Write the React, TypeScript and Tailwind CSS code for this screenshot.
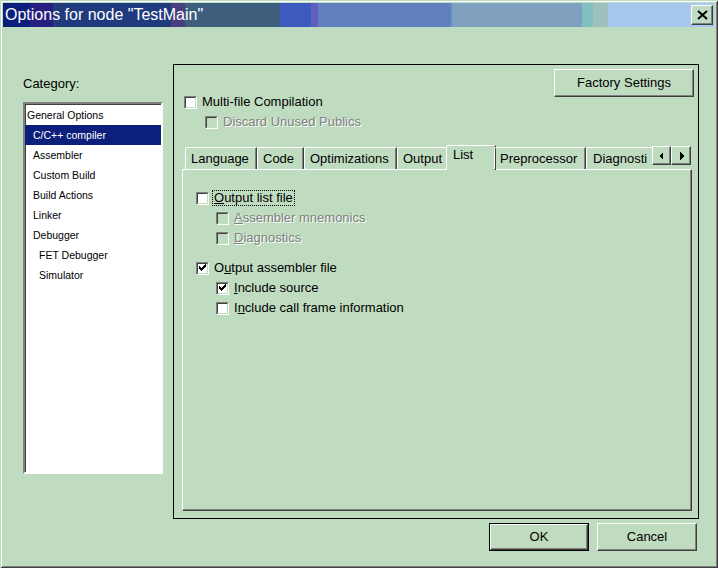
import React from "react";

const raised =
  "border border-t-white border-l-white border-r-[#404040] border-b-[#404040] shadow-[inset_-1px_-1px_0_#808080]";

const categories = [
  { label: "General Options", pad: "pl-[2px]" },
  { label: "C/C++ compiler", pad: "pl-[8px]", selected: true },
  { label: "Assembler", pad: "pl-[8px]" },
  { label: "Custom Build", pad: "pl-[8px]" },
  { label: "Build Actions", pad: "pl-[8px]" },
  { label: "Linker", pad: "pl-[8px]" },
  { label: "Debugger", pad: "pl-[8px]" },
  { label: "FET Debugger", pad: "pl-[14px]" },
  { label: "Simulator", pad: "pl-[14px]" },
];

const tabs = [
  { label: "Language", w: "w-[72px]" },
  { label: "Code", w: "w-[47px]" },
  { label: "Optimizations", w: "w-[93px]" },
  { label: "Output", w: "w-[51px]" },
  { label: "List", w: "w-[50px]", selected: true },
  { label: "Preprocessor", w: "w-[92px]" },
];

function CheckBox({ checked, disabled }: { checked?: boolean; disabled?: boolean }) {
  return (
    <span className="flex h-[13px] w-[13px] shrink-0 border border-t-[#808080] border-l-[#808080] border-r-white border-b-white">
      <span
        className={`relative flex h-full w-full border border-t-[#404040] border-l-[#404040] border-r-[#c0dcc0] border-b-[#c0dcc0] ${
          disabled ? "bg-[#c0dcc0]" : "bg-white"
        }`}
      >
        {checked && (
          <svg width="9" height="9" viewBox="0 0 9 9" shapeRendering="crispEdges">
            <rect x="1" y="2" width="1" height="3" fill="#000" />
            <rect x="2" y="3" width="1" height="3" fill="#000" />
            <rect x="3" y="4" width="1" height="3" fill="#000" />
            <rect x="4" y="3" width="1" height="3" fill="#000" />
            <rect x="5" y="2" width="1" height="3" fill="#000" />
            <rect x="6" y="1" width="1" height="3" fill="#000" />
            <rect x="7" y="0" width="1" height="3" fill="#000" />
          </svg>
        )}
      </span>
    </span>
  );
}

function Option({
  children,
  checked,
  disabled,
  focus,
  indent,
}: {
  children: React.ReactNode;
  checked?: boolean;
  disabled?: boolean;
  focus?: boolean;
  indent: string;
}) {
  return (
    <div className={`flex h-[20px] items-center ${indent}`}>
      <CheckBox checked={checked} disabled={disabled} />
      <span
        className={`ml-[3px] border px-px leading-[14px] ${
          focus ? "border-dotted border-black" : "border-transparent"
        } ${disabled ? "text-[#808080] [text-shadow:1px_1px_0_#ffffff]" : "text-black"}`}
      >
        {children}
      </span>
    </div>
  );
}

function ArrowButton({ dir }: { dir: "left" | "right" }) {
  return (
    <div className={`flex h-[19px] items-center justify-center bg-[#c0dcc0] ${raised} ${dir === "left" ? "w-[19px]" : "w-[20px]"}`}>
      <svg width="5" height="8" viewBox="0 0 5 8" shapeRendering="crispEdges">
        {dir === "left" ? <polygon points="4,0 4,8 0,4" fill="#000" /> : <polygon points="1,0 1,8 5,4" fill="#000" />}
      </svg>
    </div>
  );
}

export default function App() {
  return (
    <div className="h-[568px] w-[718px] overflow-hidden bg-[#c0dcc0] pl-[3px] pt-[3px] font-['Liberation_Sans',Arial,sans-serif] text-[13px] text-black shadow-[inset_1px_1px_0_#c0dcc0,inset_-1px_-1px_0_#404040,inset_2px_2px_0_#ffffff,inset_-2px_-2px_0_#808080]">
      {/* title bar */}
      <div className="flex h-[24px] w-[711px] items-center bg-[linear-gradient(to_right,#0c1f7c_0px,#0c1f7c_27px,#261e80_27px,#261e80_50px,#1f3b7e_50px,#1f3b7e_168px,#483e80_168px,#483e80_182px,#3e5e7e_182px,#3e5e7e_277px,#3d5bbe_277px,#3d5bbe_308px,#5f5fc0_308px,#5f5fc0_315px,#5f7fbf_315px,#5f7fbf_447px,#5f8fbf_447px,#5f8fbf_449px,#7fa0bf_449px,#7fa0bf_579px,#80c0c0_579px,#80c0c0_590px,#a0c0bd_590px,#a0c0bd_605px,#a6c8ee_605px,#a6c8ee_711px)] pl-[2px]">
        <span className="text-[16px] leading-[24px] text-white">Options for node "TestMain"</span>
        <div className={`ml-auto mr-[1px] flex h-[20px] w-[22px] items-center justify-center bg-[#c0dcc0] ${raised}`}>
          <svg width="11" height="10" viewBox="0 0 11 10">
            <path d="M1 1 L10 9 M10 1 L1 9" stroke="#000" strokeWidth="2" />
          </svg>
        </div>
      </div>

      {/* body */}
      <div className="mt-[37px] flex">
        <div className="ml-[20px] flex w-[140px] flex-col">
          <div className="mt-[12px] h-[16px] leading-[16px]">Category:</div>
          <div className="mt-[10px] h-[372px] border-2 border-t-[#808080] border-l-[#808080] border-r-white border-b-white bg-white shadow-[inset_1px_1px_0_#404040]">
            <div className="flex flex-col pt-px">
              {categories.map((c) => (
                <div
                  key={c.label}
                  className={`h-[20px] text-[10.5px] leading-[20px] ${c.pad} ${
                    c.selected ? "bg-[#0b1f7b] text-white" : "text-black"
                  }`}
                >
                  {c.label}
                </div>
              ))}
            </div>
          </div>
        </div>

        {/* right panel */}
        <div className="ml-[10px] flex h-[455px] w-[526px] flex-col border border-black">
          <div className="flex h-[80px] justify-between">
            <div className="flex flex-col pl-[10px] pt-[27px]">
              <Option indent="">Multi-file Compilation</Option>
              <Option indent="pl-[21px]" disabled>
                Discard Unused Publics
              </Option>
            </div>
            <div className={`mr-[4px] mt-[4px] flex h-[28px] w-[140px] items-center justify-center ${raised}`}>
              Factory Settings
            </div>
          </div>

          {/* tabs */}
          <div className="relative z-10 ml-[8px] flex h-[24px] w-[510px] pl-[3px]">
            <div className="-mb-[1px] flex h-[25px] w-[467px] items-start overflow-hidden">
              {tabs.map((t) =>
                t.selected ? (
                  <div
                    key={t.label}
                    className={`-mx-[2px] flex h-[25px] shrink-0 rounded-tl-[2px] border-l border-t border-r border-l-white border-t-white border-r-[#404040] bg-[#c0dcc0] pl-[6px] pt-[1px] shadow-[inset_-1px_0_0_#808080] ${t.w}`}
                  >
                    <span className="leading-[16px]">{t.label}</span>
                  </div>
                ) : (
                  <div
                    key={t.label}
                    className={`mt-[2px] flex h-[22px] shrink-0 items-center rounded-tl-[2px] border-l border-t border-r border-l-white border-t-white border-r-[#404040] pl-[5px] shadow-[inset_-1px_0_0_#808080] ${t.w}`}
                  >
                    <span className="leading-[16px]">{t.label}</span>
                  </div>
                )
              )}
              <div className="mt-[2px] flex h-[22px] w-[70px] shrink-0 items-center rounded-tl-[2px] border-l border-t border-l-white border-t-white pl-[6px]">
                <span className="leading-[16px]">Diagnosti</span>
              </div>
            </div>
            <div className="mt-[1px] flex">
              <ArrowButton dir="left" />
              <ArrowButton dir="right" />
            </div>
          </div>

          {/* tab page */}
          <div className="mb-[7px] ml-[8px] w-[510px] flex-1 border border-t-white border-l-white border-r-[#404040] border-b-[#404040] shadow-[inset_-1px_-1px_0_#808080]">
            <div className="flex flex-col pt-[18px]">
              <Option indent="pl-[13px]" focus>
                <u>O</u>utput list file
              </Option>
              <Option indent="pl-[33px]" disabled>
                <u>A</u>ssembler mnemonics
              </Option>
              <Option indent="pl-[33px]" disabled>
                <u>D</u>iagnostics
              </Option>
              <div className="h-[10px]" />
              <Option indent="pl-[13px]" checked>
                O<u>u</u>tput assembler file
              </Option>
              <Option indent="pl-[33px]" checked>
                <u>I</u>nclude source
              </Option>
              <Option indent="pl-[33px]">
                I<u>n</u>clude call frame information
              </Option>
            </div>
          </div>
        </div>
      </div>

      {/* dialog buttons */}
      <div className="mr-[21px] mt-[4px] flex justify-end gap-[8px]">
        <div className="h-[28px] w-[100px] border border-black">
          <div className={`flex h-full w-full items-center justify-center ${raised}`}>OK</div>
        </div>
        <div className={`flex h-[28px] w-[100px] items-center justify-center ${raised}`}>Cancel</div>
      </div>
    </div>
  );
}
